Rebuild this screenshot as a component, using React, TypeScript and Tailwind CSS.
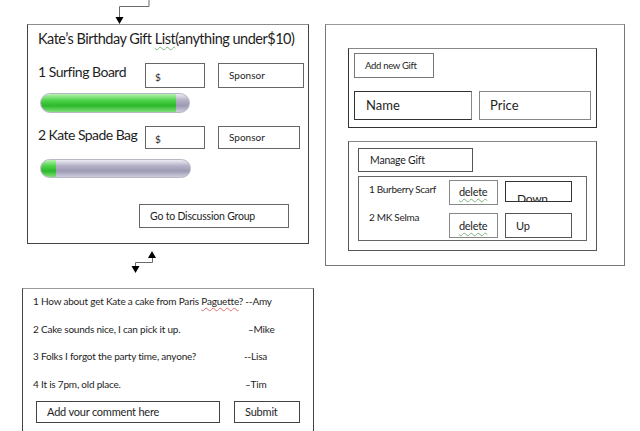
import React from "react";

const font = { fontFamily: "Lato, 'Open Sans', sans-serif" };

function Bar({ fill, w }: { fill: number; w: number }) {
  return (
    <div
      className="h-full rounded-full overflow-hidden border border-[#b8b8c4] bg-[linear-gradient(to_bottom,#ecebf2,#b3b0c6_35%,#9c99b4_65%,#cfcddd)] flex"
      style={{ width: w }}
    >
      <div
        className="h-full rounded-l-full bg-[linear-gradient(to_bottom,#b6f2b0,#4fd34a_35%,#2cb82a_65%,#7fe07a)]"
        style={{ width: fill }}
      />
    </div>
  );
}

export default function App() {
  return (
    <div
      className="w-[640px] h-[431px] bg-white overflow-hidden flex text-[#1e1e1e]"
      style={font}
    >
      {/* Left column */}
      <div className="w-[325px] shrink-0 flex flex-col">
        <svg width="320" height="24" className="block shrink-0">
          <polyline points="149,0 149,6.5 119.5,6.5 119.5,18" fill="none" stroke="#6a6a6a" strokeWidth="1" />
          <polygon points="115.5,17 123.5,17 119.5,24" fill="#000" />
        </svg>

        {/* Gift list box */}
        <div className="ml-[27px] w-[282px] h-[220px] shrink-0 border border-[#444] border-t-[#8c8c8c] pl-[10px]">
          <div className="mt-[4px] h-[20px] leading-[20px] text-[14.5px] tracking-[-0.5px] whitespace-nowrap">
            Kate’s Birthday Gift{" "}
            <span className="underline decoration-wavy decoration-[#7fb07f] decoration-1 underline-offset-[2px]">List</span>
            (anything under$10)
          </div>

          <div className="mt-[14px] flex items-start h-[25px]">
            <div className="w-[107px] leading-[18px] text-[14px] tracking-[-0.5px] whitespace-nowrap">1 Surfing Board</div>
            <div className="w-[60px] h-[25px] border border-[#666] text-[10px] pl-[9px] pt-[7px] leading-[12px]">$</div>
            <div className="ml-[13px] w-[86px] h-[25px] border border-[#666] text-[10px] pl-[10px] pt-[5px] leading-[12px]">Sponsor</div>
          </div>

          <div className="mt-[5px] ml-[2px] h-[20px]">
            <Bar fill={135} w={150} />
          </div>

          <div className="mt-[13px] flex items-start h-[23px]">
            <div className="w-[107px] leading-[18px] text-[14px] tracking-[-0.55px] whitespace-nowrap">2 Kate Spade Bag</div>
            <div className="w-[60px] h-[23px] border border-[#666] text-[10px] pl-[9px] pt-[6px] leading-[12px]">$</div>
            <div className="ml-[13px] w-[82px] h-[23px] border border-[#666] text-[10px] pl-[10px] pt-[4px] leading-[12px]">Sponsor</div>
          </div>

          <div className="mt-[10px] ml-[2px] h-[19px]">
            <Bar fill={15} w={151} />
          </div>

          <div className="mt-[26px] ml-[101px] w-[150px] h-[24px] border border-[#666] text-[10.5px] pl-[10px] leading-[22px] whitespace-nowrap tracking-[-0.2px]">
            Go to Discussion Group
          </div>
        </div>

        <svg width="320" height="44" className="block shrink-0">
          <polygon points="148,14 156,14 152,7" fill="#000" />
          <polyline points="152.5,14 152.5,18.5 135.5,18.5 135.5,22" fill="none" stroke="#6a6a6a" strokeWidth="1" />
          <polygon points="131.5,22 139.5,22 135.5,29" fill="#000" />
        </svg>

        {/* Discussion box */}
        <div className="ml-[22px] w-[292px] h-[160px] shrink-0 border border-[#444] border-t-[#9a9a9a] pl-[10px] text-[10px] tracking-[-0.2px]">
          <div className="mt-[5px] flex flex-col gap-[13.6px]">
            <div className="h-[14px] leading-[14px] whitespace-nowrap">
              1 How about get Kate a cake from Paris{" "}
              <span className="underline decoration-wavy decoration-[#e07070] decoration-1 underline-offset-[2px]">Paguette</span>? --Amy
            </div>
            <div className="h-[14px] leading-[14px] flex whitespace-nowrap">
              <span className="w-[215px]">2 Cake sounds nice, I can pick it up.</span>
              <span>–Mike</span>
            </div>
            <div className="h-[14px] leading-[14px] flex whitespace-nowrap">
              <span className="w-[211px]">3 Folks I forgot the party time, anyone?</span>
              <span>--Lisa</span>
            </div>
            <div className="h-[14px] leading-[14px] flex whitespace-nowrap">
              <span className="w-[212px]">4 It is 7pm, old place.</span>
              <span>–Tim</span>
            </div>
          </div>
          <div className="mt-[10px] ml-[3px] flex">
            <div className="w-[184px] h-[22px] border border-[#444] pl-[10px] leading-[20px] text-[11px]">Add vour comment here</div>
            <div className="ml-[14px] w-[66px] h-[22px] border border-[#444] pl-[10px] leading-[20px] text-[11px]">Submit</div>
          </div>
        </div>
      </div>

      {/* Right box */}
      <div className="mt-[24px] w-[300px] h-[242px] shrink-0 border border-[#777] border-t-[#999] pl-[22px] pt-[23px]">
        <div className="w-[249px] h-[80px] border border-[#333] border-t-[#888] pl-[5px] pt-[4px]">
          <div className="w-[80px] h-[25px] border border-[#777] text-[9.5px] pl-[10px] leading-[23px] tracking-[-0.3px] whitespace-nowrap">Add new Gift</div>
          <div className="mt-[13px] flex">
            <div className="w-[118px] h-[29px] border border-[#333] border-r-[#888] pl-[11px] leading-[27px] text-[13px]">Name</div>
            <div className="ml-[7px] w-[112px] h-[29px] border border-[#888] pl-[10px] leading-[27px] text-[13px]">Price</div>
          </div>
        </div>

        <div className="mt-[13px] w-[249px] h-[110px] border border-[#555] border-t-[#888] pl-[9px] pt-[6px]">
          <div className="w-[115px] h-[24px] border border-[#555] pl-[11px] leading-[22px] text-[10.5px] tracking-[-0.2px]">Manage Gift</div>
          <div className="mt-[4px] w-[229px] h-[65px] border border-[#666] pl-[10px] pt-[3px] text-[10px] tracking-[-0.3px]">
            <div className="flex items-start h-[25px]">
              <div className="w-[80px] mt-[2px] leading-[14px] whitespace-nowrap">1 Burberry Scarf</div>
              <div className="w-[49px] h-[25px] border border-[#888] pl-[9px] leading-[21px] text-[11px]">
                <span className="underline decoration-wavy decoration-[#7fb07f] decoration-1 underline-offset-[2px]">delete</span>
              </div>
              <div className="ml-[7px] mt-[1px] w-[67px] h-[21px] border border-[#333] overflow-hidden pl-[11px] pt-[9px] leading-[16px] text-[12px]">Down</div>
            </div>
            <div className="mt-[8px] flex items-start h-[25px]">
              <div className="w-[80px] -mt-[3px] leading-[14px] whitespace-nowrap">2 MK Selma</div>
              <div className="w-[49px] h-[25px] border border-[#888] pl-[9px] leading-[23px] text-[11px]">
                <span className="underline decoration-wavy decoration-[#7fb07f] decoration-1 underline-offset-[2px]">delete</span>
              </div>
              <div className="ml-[7px] w-[67px] h-[25px] border border-[#555] pl-[10px] leading-[23px] text-[11px]">Up</div>
            </div>
          </div>
        </div>
      </div>
    </div>
  );
}
